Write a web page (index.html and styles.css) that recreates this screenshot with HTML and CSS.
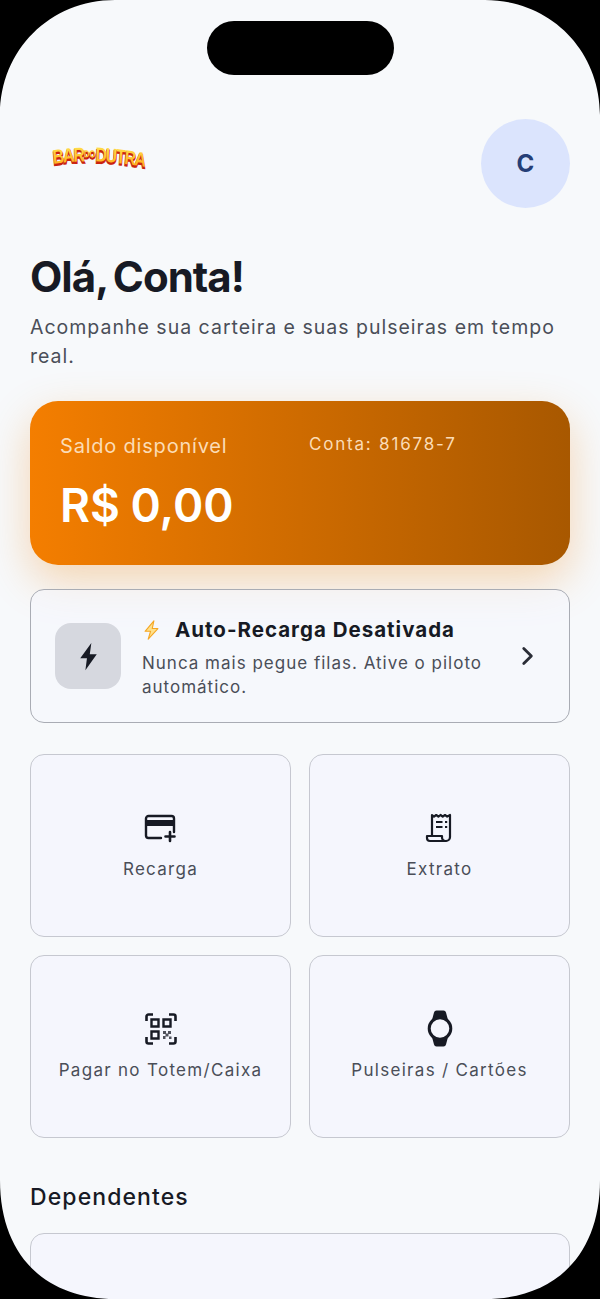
FILE: index.html
```html
<!DOCTYPE html>
<html lang="pt-BR">

<head>
    <meta charset="UTF-8">
    <meta name="viewport" content="width=device-width, initial-scale=1.0">
    <title>Bar do Dutra - Carteira</title>
    <link rel="stylesheet" href="styles.css">
</head>

<body>
    <main class="screen">
        <header class="topbar">
            <svg class="logo" viewBox="0 0 125 32" preserveAspectRatio="none" role="img" aria-label="Bar do Dutra">
                <defs>
                    <linearGradient id="logoFill" x1="0" y1="0" x2="0" y2="1">
                        <stop offset="0" stop-color="#ffe652" />
                        <stop offset="1" stop-color="#ffa212" />
                    </linearGradient>
                    <path id="logoArc" d="M3 23 Q55 16 124 27" fill="none" />
                </defs>
                <text class="logo-shadow" dy="1.800">
                    <textPath href="#logoArc">BAR<tspan class="logo-small" dy="-4">DO</tspan><tspan dy="4">DUTRA</tspan></textPath>
                </text>
                <text class="logo-text">
                    <textPath href="#logoArc">BAR<tspan class="logo-small" dy="-4">DO</tspan><tspan dy="4">DUTRA</tspan></textPath>
                </text>
            </svg>
            <div class="avatar">C</div>
        </header>

        <section class="greeting">
            <h1>Olá, Conta!</h1>
            <p>Acompanhe sua carteira e suas pulseiras em tempo real.</p>
        </section>

        <section class="balance">
            <div class="balance-info">
                <span class="balance-label">Saldo disponível</span>
                <strong class="balance-value">R$ 0,00</strong>
            </div>
            <span class="balance-account">Conta: 81678-7</span>
        </section>

        <a class="autorecharge" href="#">
            <span class="bolt-box">
                <svg viewBox="0 0 24 24" width="31" height="31">
                    <path d="M14.200 1.600 5.600 13.400h5.200L9.600 22.600l8.800-12.400h-5.400z" fill="#171a24" />
                </svg>
            </span>
            <span class="autorecharge-text">
                <span class="autorecharge-title">
                    <svg viewBox="0 0 20 24" width="19" height="22">
                        <path d="M12.600 2 3 13.400h6L6.400 22 17 10.400h-6.200z" fill="#ffe08a" stroke="#f5a623" stroke-width="1.200" stroke-linejoin="round" />
                    </svg>
                    Auto-Recarga Desativada
                </span>
                <span class="autorecharge-desc">Nunca mais pegue filas. Ative o piloto automático.</span>
            </span>
            <svg class="chevron" viewBox="0 0 24 24" width="26" height="26">
                <path d="m9 5 7 7-7 7" fill="none" stroke="#2a2d36" stroke-width="2.600" stroke-linecap="round" stroke-linejoin="round" />
            </svg>
        </a>

        <nav class="actions">
            <a class="action" href="#">
                <span class="action-icon">
                    <svg viewBox="0 0 34 30" width="34" height="30">
                        <path d="M17 25H4.500A2.500 2.500 0 0 1 2 22.500V5.500A2.500 2.500 0 0 1 4.500 3h23A2.500 2.500 0 0 1 30 5.500V19" fill="none" stroke="#171a24" stroke-width="2.400" stroke-linecap="round" />
                        <path d="M2 7h28v6H2z" fill="#171a24" />
                        <path d="M26 19v9M21.500 23.500h9" fill="none" stroke="#171a24" stroke-width="2.600" stroke-linecap="round" />
                    </svg>
                </span>
                Recarga
            </a>
            <a class="action" href="#">
                <span class="action-icon">
                    <svg viewBox="0 0 32 32" width="32" height="32">
                        <path d="M8 24V3l2 1.600L12.200 3l2.200 1.600L16.500 3l2.200 1.600L21 3l2.200 1.600L26 3v22a4 4 0 0 1-4 4H6" fill="none" stroke="#171a24" stroke-width="2.200" stroke-linejoin="round" />
                        <path d="M3 24h15v1.500a3.500 3.500 0 0 0 3.500 3.500H6a3 3 0 0 1-3-3z" fill="none" stroke="#171a24" stroke-width="2.200" stroke-linejoin="round" />
                        <path d="M12 10h6.500M12 15h6.500" fill="none" stroke="#171a24" stroke-width="2.200" />
                        <path d="M21 10h2.200M21 15h2.200" fill="none" stroke="#171a24" stroke-width="2.200" />
                    </svg>
                </span>
                Extrato
            </a>
            <a class="action" href="#">
                <span class="action-icon">
                    <svg viewBox="0 0 32 32" width="32" height="32">
                        <path d="M1.500 8V3.500a2 2 0 0 1 2-2H8M24 1.500h4.500a2 2 0 0 1 2 2V8M30.500 24v4.500a2 2 0 0 1-2 2H24M8 30.500H3.500a2 2 0 0 1-2-2V24" fill="none" stroke="#171a24" stroke-width="2.600" />
                        <path d="M6.500 6.500h7v7h-7zM18.500 6.500h7v7h-7zM6.500 18.500h7v7h-7z" fill="none" stroke="#171a24" stroke-width="2.400" />
                        <path d="M18 18h3v3h-3zM23 18h3v3h-3zM20.500 20.500h3v3h-3zM18 23h2.500v3H18zM24 23.500h2.500V26H24z" fill="#171a24" opacity=".75" />
                    </svg>
                </span>
                Pagar no Totem/Caixa
            </a>
            <a class="action" href="#">
                <span class="action-icon">
                    <svg viewBox="0 0 26 37" width="26" height="37">
                        <path d="M7 2.500Q7.500 .5 9.500 .5h7q2 0 2.500 2L21 10H5zM7 34.500q.5 2 2.500 2h7q2 0 2.500-2L21 27H5z" fill="#171a24" />
                        <circle cx="13" cy="18.500" r="10.800" fill="#f5f6fd" stroke="#171a24" stroke-width="3" />
                    </svg>
                </span>
                Pulseiras / Cartões
            </a>
        </nav>

        <h2 class="section-title">Dependentes</h2>
        <div class="dependents"></div>

        <div class="notch"></div>
        <svg class="bezel" viewBox="0 0 600 1299" width="600" height="1299">
            <path fill-rule="evenodd" fill="#000" d="M0 0H600V1299H0ZM115 0C50 0 0 50 0 115V1180C0 1255 45 1299 115 1299H485C555 1299 600 1255 600 1180V115C600 50 550 0 485 0Z" />
        </svg>
    </main>
</body>

</html>
```

FILE: styles.css
```css
* {
    box-sizing: border-box;
}

html,
body {
    margin: 0;
    padding: 0;
    height: 1299px;
    overflow: hidden;
}

body {
    font-family: Inter, "Noto Sans", sans-serif;
    background-color: #f7f9fb;
    color: #171a24;
}

a {
    color: inherit;
    text-decoration: none;
}

.screen {
    position: relative;
    width: 600px;
    height: 1299px;
    padding: 119px 30px 0;
    overflow: hidden;
}

.notch {
    position: absolute;
    top: 21px;
    left: 207px;
    width: 187px;
    height: 54px;
    border-radius: 27px;
    background-color: #000;
}

.bezel {
    position: absolute;
    top: 0;
    left: 0;
    pointer-events: none;
}

.topbar {
    display: flex;
    justify-content: space-between;
    align-items: flex-start;
    height: 89px;
}

.logo {
    width: 100px;
    height: 32px;
    margin: 22px 0 0 21px;
}

.logo-text,
.logo-shadow {
    font-family: "Liberation Sans", sans-serif;
    font-size: 20px;
    font-weight: 700;
    letter-spacing: -1.7px;
}

.logo-text {
    fill: url(#logoFill);
}

.logo-shadow {
    fill: #c9230f;
    stroke: #c9230f;
    stroke-width: 1.2px;
}

.logo-small {
    font-size: 10px;
    letter-spacing: -0.4px;
}

.avatar {
    display: flex;
    align-items: center;
    justify-content: center;
    width: 89px;
    height: 89px;
    border-radius: 50%;
    background-color: #dbe4fd;
    color: #253e77;
    font-size: 24px;
    font-weight: 700;
}

.greeting {
    margin-top: 42px;
}

.greeting h1 {
    margin: 0;
    font-size: 42px;
    line-height: 54px;
    font-weight: 700;
    letter-spacing: -1px;
    word-spacing: -3px;
}

.greeting p {
    margin: 9px 0 0;
    font-size: 19.5px;
    line-height: 29px;
    letter-spacing: 1px;
    color: #4a4e58;
}

.balance {
    display: flex;
    align-items: flex-start;
    height: 164px;
    margin-top: 30px;
    padding: 31px 30px;
    border-radius: 28px;
    background: linear-gradient(90deg, #f47e00, #a85800);
    box-shadow: 0 16px 44px rgba(240, 130, 10, 0.3);
}

.balance-info {
    display: flex;
    flex-direction: column;
    width: 249px;
}

.balance-label {
    font-size: 20px;
    line-height: 28px;
    letter-spacing: 0.8px;
    color: #fbdcb6;
}

.balance-value {
    margin-top: 17px;
    font-size: 46px;
    line-height: 56px;
    font-weight: 600;
    word-spacing: -1px;
    color: #fff;
}

.balance-account {
    margin-top: 1px;
    font-size: 17px;
    line-height: 22px;
    letter-spacing: 1.8px;
    color: #fbdcb6;
}

.autorecharge {
    position: relative;
    display: flex;
    align-items: center;
    height: 134px;
    margin-top: 24px;
    padding: 0 29px 0 24px;
    border: 1.5px solid #a9acb4;
    border-radius: 14px;
    background-color: rgba(245, 246, 253, 0.6);
}

.bolt-box {
    display: flex;
    align-items: center;
    justify-content: center;
    flex: none;
    width: 66px;
    height: 66px;
    border-radius: 16px;
    background-color: #d6d8df;
}

.autorecharge-text {
    display: flex;
    flex-direction: column;
    flex: 1;
    margin-left: 21px;
    padding-top: 3px;
}

.autorecharge-title {
    display: flex;
    align-items: center;
    gap: 14px;
    font-size: 20.5px;
    line-height: 28px;
    font-weight: 700;
    letter-spacing: 1px;
}

.autorecharge-desc {
    margin-top: 7px;
    font-size: 17px;
    line-height: 24px;
    letter-spacing: 1px;
    color: #4a4e58;
}

.chevron {
    flex: none;
    margin-left: 20px;
}

.actions {
    display: grid;
    grid-template-columns: 261px 261px;
    grid-auto-rows: 183px;
    gap: 18px;
    margin-top: 31px;
}

.action {
    display: flex;
    flex-direction: column;
    align-items: center;
    justify-content: center;
    gap: 12px;
    padding-bottom: 2px;
    border: 1.5px solid #c6c8d0;
    border-radius: 14px;
    background-color: #f5f6fd;
    font-size: 17px;
    line-height: 22px;
    letter-spacing: 1.3px;
    color: #4a4e58;
}

.action-icon {
    display: flex;
    align-items: center;
    justify-content: center;
    height: 36px;
}

.section-title {
    margin: 43px 0 0;
    font-size: 23px;
    line-height: 32px;
    font-weight: 500;
    letter-spacing: 1.1px;
}

.dependents {
    height: 160px;
    margin-top: 20px;
    border: 1.5px solid #c6c8d0;
    border-radius: 14px;
    background-color: #f5f6fd;
}
```
